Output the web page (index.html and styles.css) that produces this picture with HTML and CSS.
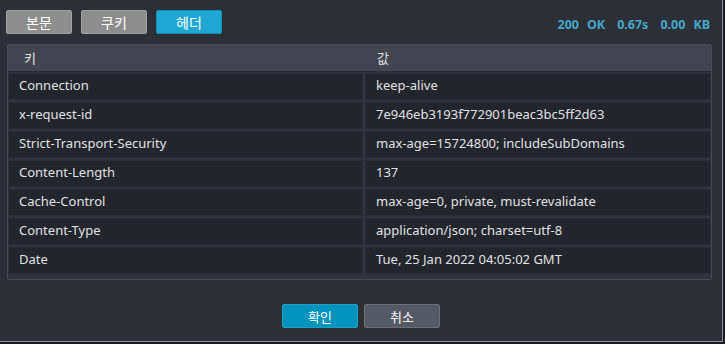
FILE: index.html
```html
<!DOCTYPE html>
<html lang="ko">
<head>
  <meta charset="UTF-8" />
  <title>응답 헤더</title>
  <link rel="stylesheet" href="styles.css">
</head>
<body>
<div class="window">
  <div class="topbar">
    <div class="tabs">
      <button class="tab">본문</button>
      <button class="tab">쿠키</button>
      <button class="tab active">헤더</button>
    </div>
    <div class="status">
      <span>200</span><span>OK</span><span class="gap">0.67s</span><span class="gap">0.00</span><span>KB</span>
    </div>
  </div>

  <div class="panel">
    <div class="head">
      <div class="hkey">키</div>
      <div class="hval">값</div>
    </div>
    <div class="rows">
      <div class="row"><div class="cell">Connection</div><div class="cell">keep-alive</div></div>
      <div class="row"><div class="cell">x-request-id</div><div class="cell">7e946eb3193f772901beac3bc5ff2d63</div></div>
      <div class="row"><div class="cell">Strict-Transport-Security</div><div class="cell">max-age=15724800; includeSubDomains</div></div>
      <div class="row"><div class="cell">Content-Length</div><div class="cell">137</div></div>
      <div class="row"><div class="cell">Cache-Control</div><div class="cell">max-age=0, private, must-revalidate</div></div>
      <div class="row"><div class="cell">Content-Type</div><div class="cell">application/json; charset=utf-8</div></div>
      <div class="row"><div class="cell">Date</div><div class="cell">Tue, 25 Jan 2022 04:05:02 GMT</div></div>
    </div>
  </div>

  <div class="footer">
    <button class="btn ok">확인</button>
    <button class="btn cancel">취소</button>
  </div>
</div>
</body>
</html>
```

FILE: styles.css
```css
* { margin: 0; padding: 0; box-sizing: border-box; }
body {
  background: #1c1d22;
  font-family: "Noto Sans", "Noto Sans CJK KR", sans-serif;
  color: #e2e3e6;
}
.window {
  width: 723px;
  height: 342px;
  background: #2d2f37;
  border-right: 1px solid #8d91a0;
  border-bottom: 1px solid #8d91a0;
  padding: 10px 0 0 6px;
}
.topbar {
  display: flex;
  justify-content: space-between;
  align-items: center;
  height: 24px;
  padding-right: 12px;
}
.tabs { display: flex; gap: 9px; }
.tab {
  width: 66px;
  height: 24px;
  background: #8e8e8e;
  border: 1px solid #a2a2a2;
  border-radius: 2px;
  color: #fff;
  font-family: "Noto Sans CJK KR", sans-serif;
  font-size: 14px;
}
.tab.active {
  background: #1ea7d2;
  border-color: #178db5;
}
.status {
  display: flex;
  gap: 8px;
  color: #44a8cb;
  font-weight: 700;
  font-size: 12.5px;
  padding-top: 4px;
}
.status .gap { margin-left: 4px; }

.panel {
  margin: 10px 0 0 1px;
  width: 705px;
  height: 236px;
  background: #31333c;
  border: 1px solid #464956;
  border-radius: 2px;
}
.head {
  display: grid;
  grid-template-columns: 356px 1fr;
  height: 27px;
  background: #424550;
  border-bottom: 1px solid #2a2c33;
  font-family: "Noto Sans CJK KR", sans-serif;
  font-size: 13px;
  line-height: 26px;
}
.hkey { padding-left: 16px; }
.hval { padding-left: 13px; }
.rows {
  display: flex;
  flex-direction: column;
  gap: 2px;
  padding: 1px 0 0 0;
}
.row {
  display: grid;
  grid-template-columns: 355px 1fr;
  gap: 2px;
}
.cell {
  height: 27px;
  background: #23252c;
  border: 1px solid #2b2d35;
  padding-left: 10px;
  font-size: 13px;
  line-height: 23px;
  color: #e0e1e4;
  white-space: nowrap;
}

.footer {
  display: flex;
  justify-content: center;
  gap: 6px;
  margin-top: 24px;
  padding-right: 6px;
}
.btn {
  width: 76px;
  height: 24px;
  border-radius: 2px;
  color: #fff;
  font-family: "Noto Sans CJK KR", sans-serif;
  font-size: 13px;
}
.ok { background: #0093bc; border: 1px solid #1a9ec6; }
.cancel { background: #555865; border: 1px solid #6b6e7a; }
```
